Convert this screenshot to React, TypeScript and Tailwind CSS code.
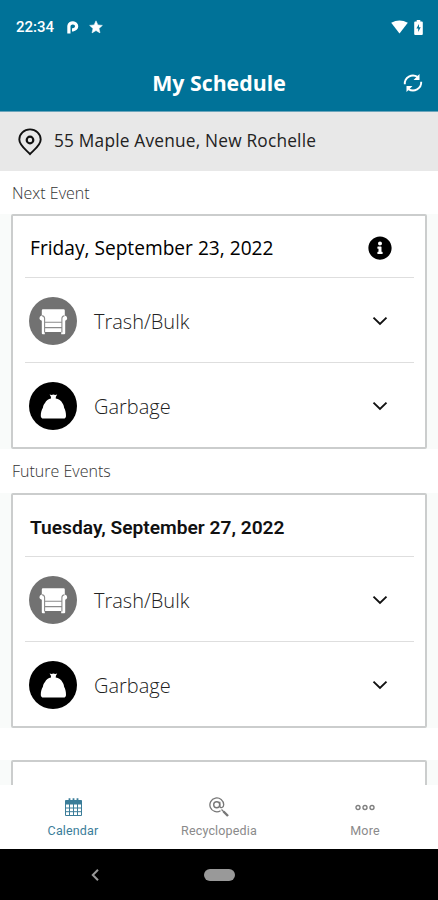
import type { ReactNode } from 'react';
import { FaInfoCircle } from 'react-icons/fa';

type EventKind = 'bulk' | 'garbage';

interface ScheduleEvent {
  kind: EventKind;
  label: string;
}

const events: ScheduleEvent[] = [
  { kind: 'bulk', label: 'Trash/Bulk' },
  { kind: 'garbage', label: 'Garbage' },
];

const ArmchairIcon = () => (
  <svg className="block size-12" viewBox="0 0 48 48">
    <circle cx="24" cy="24" r="24" fill="#727272" />
    <path
      d="M12.800 13.500q0-1.200 1.200-1.200h20.600q1.200 0 1.200 1.200v5q2.400.6 2.400 2.700 0 1.700-2 2.600V36.200q0 1-1 1h-3V35H15.800v2.200h-2q-1 0-1-1V23.800q-2.400-.9-2.400-2.600 0-2.100 2.400-2.700z"
      fill="#fff"
    />
    <path
      d="M13 18.800q2.600.3 2.600 2.600v14M35.500 18.800q-2.600.3-2.600 2.600v14M15.600 25.300h17.300M15.600 30.600h17.300"
      fill="none"
      stroke="#8a8a8a"
      strokeWidth="1.100"
    />
  </svg>
);

const GarbageBagIcon = () => (
  <svg className="block size-12" viewBox="0 0 48 48">
    <circle cx="24" cy="24" r="24" fill="#000" />
    <path
      d="M20.600 12.500l2 .4 1.800-.5 1.800.5 2-.4-1.300 2.300-.2 1.700c3 .6 5.500 2 6.600 4.600.9 1.200 1.600 2.800 1.800 4.600 1.300 2.200 1.900 5 1.900 8q0 2.800-2.500 2.800h-20q-2.700 0-2.700-2.800c0-3 .7-5.800 2.100-8 .3-1.900 1-3.500 2.100-4.700 1.200-2.400 3.300-3.900 6-4.500l-.1-1.700z"
      fill="#fff"
    />
  </svg>
);

const ChevronIcon = () => (
  <svg className="block h-[10px] w-4" viewBox="0 0 16 10">
    <path d="M1.500 1.600 8 8l6.500-6.400" fill="none" stroke="#111" strokeWidth="1.900" />
  </svg>
);

const SyncIcon = () => (
  <svg className="block size-5" viewBox="0 0 20 20" fill="none" stroke="#fff" strokeWidth="1.900">
    <path d="M1.800 11.200A8.200 8.200 0 0 1 14.500 3.900" />
    <path d="M18.200 8.800A8.200 8.200 0 0 1 5.500 16.100" />
    <path d="M16.500 1v6h-6zM3.500 19v-6h6z" fill="#fff" stroke="none" />
  </svg>
);

const PinIcon = () => (
  <svg className="block h-[28px] w-6" viewBox="0 0 24 28" fill="none" stroke="#111" strokeWidth="1.900">
    <path d="M12 26C8.500 22.200 1.300 17.600 1.300 11.500a10.700 10.100 0 0 1 21.400 0C22.700 17.600 15.500 22.200 12 26z" />
    <circle cx="12" cy="12" r="3.300" strokeWidth="2.200" />
  </svg>
);

const CalendarIcon = () => (
  <svg className="block h-[18px] w-[17px]" viewBox="0 0 17 18" fill="none" stroke="#3b7d99">
    <path d="M.5 2.500h16v15H.5z" strokeWidth="1" />
    <path d="M.5 4.500h16" strokeWidth="4" />
    <path d="M4.500.3v3M8.500.3v3M12.500.3v3" strokeWidth="1.800" />
    <path d="M.5 10h16M.5 13.700h16M4.500 6v11.500M8.500 6v11.500M12.500 6v11.500" strokeWidth="1" />
  </svg>
);

const RecyclopediaIcon = () => (
  <svg className="block size-5" viewBox="0 0 20 20" fill="none" stroke="#777">
    <path d="M11.500 13.700A6.900 6.900 0 1 1 14.700 7.800c0 3.200-3.800 3.800-3.900 1.300V4.800" strokeWidth="1.300" />
    <circle cx="7.700" cy="7.800" r="3" strokeWidth="1.400" />
    <path d="M12.500 12.500l2.500 2.500" strokeWidth="1.300" />
    <path d="M14.500 14.500l4.500 4.500" strokeWidth="2.400" />
  </svg>
);

const MoreIcon = () => (
  <svg className="block h-[7px] w-5" viewBox="0 0 20 7" fill="none" stroke="#808080" strokeWidth="1.400">
    <circle cx="3" cy="3.500" r="2" />
    <circle cx="10" cy="3.500" r="2" />
    <circle cx="17" cy="3.500" r="2" />
  </svg>
);

function StatusBar() {
  return (
    <div className="flex h-[54px] items-center justify-between pr-[14px] pl-4">
      <div className="flex items-center">
        <span className="w-[37px] font-[Roboto] text-[15px] leading-5 font-medium whitespace-nowrap">22:34</span>
        <svg className="ml-[14px] block h-[14px] w-3" viewBox="0 0 12 14">
          <path
            d="M1.900 13.500V5.900a3.900 3.500 0 1 1 4.100 3.900H5"
            fill="none"
            stroke="#fff"
            strokeWidth="3.200"
          />
        </svg>
        <svg className="ml-[10px] block h-[14px] w-[14px]" viewBox="0 0 14 14">
          <path d="M7 .8l1.900 4.100 4.500.5-3.400 3 1 4.500L7 10.600l-4 2.300 1-4.500-3.400-3 4.500-.5z" fill="#fff" stroke="#fff" strokeWidth=".5" />
        </svg>
      </div>
      <div className="flex items-center gap-[6px] pr-px">
        <svg className="block h-[14px] w-[17px]" viewBox="0 0 17 14">
          <path d="M.2 2.800Q8.500-2 16.800 2.800L8.500 13.600z" fill="#fff" />
        </svg>
        <svg className="block h-[15px] w-[9px]" viewBox="0 0 9 15">
          <path d="M2.700 0h3.600v1.500h1.500q1 0 1 1V14q0 1-1 1H1.200q-1 0-1-1V2.500q0-1 1-1h1.500z" fill="#fff" />
          <path d="M5 4 2.400 8.600h1.800V12l2.500-4.700H5z" fill="#007298" />
        </svg>
      </div>
    </div>
  );
}

interface EventCardProps {
  title?: ReactNode;
  items: ScheduleEvent[];
  showInfo?: boolean;
}

function EventCard({ title, items, showInfo = false }: EventCardProps) {
  return (
    <div className="bg-[#f9fbfa] px-[11px]">
      <div className="h-[235px] rounded-[2px] border-2 border-[#cbcdcd] bg-white pr-[11px] pl-3">
        <div className="flex h-[62px] items-center justify-between border-b border-[#dedede] pt-[3px] pr-[22px] pl-[5px]">
          {title}
          {showInfo && <FaInfoCircle className="size-6 text-black" />}
        </div>
        {items.map(({ kind, label }) => (
          <div
            key={kind}
            className="flex h-[84.500px] items-center border-b border-[#dedede] pt-[3px] pr-[26px] pl-1 last:border-b-0 last:pt-[2px]"
          >
            {kind === 'bulk' ? <ArmchairIcon /> : <GarbageBagIcon />}
            <span className="ml-[17px] flex-1 pt-[2px] text-[20px] leading-7 font-light text-[#222]">{label}</span>
            <ChevronIcon />
          </div>
        ))}
      </div>
    </div>
  );
}

function NavItem({ icon, label, active = false }: { icon: ReactNode; label: string; active?: boolean }) {
  return (
    <div
      className={`flex flex-1 flex-col items-center pt-3 font-[Roboto] text-[12.500px] ${
        active ? 'text-[#3b7d99]' : 'text-[#8a8a8a]'
      }`}
    >
      <div className="flex h-5 items-center">{icon}</div>
      <span className="mt-[5px] leading-[18px] tracking-[0.15px]">{label}</span>
    </div>
  );
}

export default function App() {
  return (
    <div className="flex h-[900px] w-[438px] flex-col overflow-hidden bg-white font-['Open_Sans','Noto_Sans',sans-serif]">
      <header className="h-28 shrink-0 border-b border-[#6ba5bb] bg-[#007298] text-white">
        <StatusBar />
        <div className="grid h-[57px] grid-cols-[1fr_auto_1fr] items-center">
          <h1 className="col-start-2 text-[21.300px] leading-7 font-bold">My Schedule</h1>
          <div className="justify-self-end pr-[15px]">
            <SyncIcon />
          </div>
        </div>
      </header>

      <div className="flex h-[59px] shrink-0 items-center bg-[#e8e8e8] pl-[18px]">
        <PinIcon />
        <span className="ml-3 pb-px text-[17.300px] leading-6 tracking-[0.200px] text-[#222]">55 Maple Avenue, New Rochelle</span>
      </div>

      <main className="h-[614px] shrink-0 overflow-hidden">
        <h2 className="h-[43px] pt-[11px] pl-3 text-[16px] leading-[22px] font-light text-[#333]">Next Event</h2>
        <EventCard
          showInfo
          items={events}
          title={<span className="text-[19.150px] leading-7 text-black">Friday, September 23, 2022</span>}
        />
        <h2 className="h-11 pt-[11px] pl-3 text-[16px] leading-[22px] font-light text-[#333]">Future Events</h2>
        <EventCard
          items={events}
          title={<span className="pt-px font-[Roboto] text-[19.200px] leading-7 font-semibold text-[#111]">Tuesday, September 27, 2022</span>}
        />
        <div className="mt-8">
          <EventCard items={[]} />
        </div>
      </main>

      <nav className="flex h-16 shrink-0 bg-white">
        <NavItem active icon={<CalendarIcon />} label="Calendar" />
        <NavItem icon={<RecyclopediaIcon />} label="Recyclopedia" />
        <NavItem icon={<MoreIcon />} label="More" />
      </nav>

      <footer className="grid flex-1 grid-cols-3 items-center bg-black">
        <svg className="ml-[91px] block h-3 w-2" viewBox="0 0 8 12">
          <path d="M7 .8 1.800 6 7 11.200" fill="none" stroke="#999" strokeWidth="2" />
        </svg>
        <div className="h-3 w-[31px] justify-self-center rounded-full bg-[#999]" />
      </footer>
    </div>
  );
}
